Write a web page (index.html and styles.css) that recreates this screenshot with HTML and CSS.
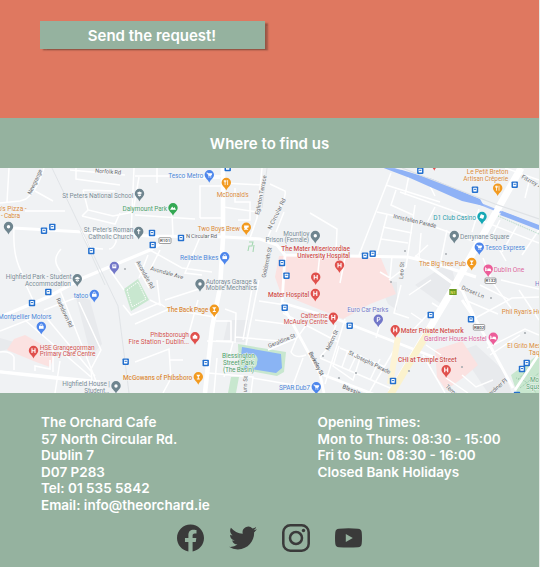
FILE: index.html
```html
<!DOCTYPE html>
<html lang="en">
<head>
<meta charset="utf-8">
<title>The Orchard Cafe</title>
<link rel="stylesheet" href="styles.css">
</head>
<body>
<main class="page">
<section class="request"><button class="send">Send the request!</button></section>
<section class="find"><h2>Where to find us</h2></section>
<svg class="map" viewBox="0 168 539 225" preserveAspectRatio="none">
<defs>
<path id="pin" d="M0 7.8C-.8 4.6-4.7 3.4-4.7-.2a4.7 4.7 0 0 1 9.4 0C4.7 3.4.8 4.6 0 7.8Z"/>
<g id="bus"><rect x="-3.2" y="-3.2" width="6.4" height="6.4" rx=".8" fill="#2470ce"/><rect x="-1.7" y="-1.9" width="3.4" height="3.6" rx=".5" fill="#fff"/><path d="M-1.1-.9h2.2v1h-2.2z" fill="#2470ce"/></g>
<g id="hospital"><use href="#pin" fill="#e0504c"/><path d="M-1.5-2.4v4.6M1.5-2.4v4.6M-1.5 0h3" stroke="#fff" stroke-width="1.1"/></g>
<g id="place"><use href="#pin" fill="#6f858f"/><circle r="1.7" fill="#fff"/></g>
<g id="church"><use href="#pin" fill="#6f858f"/><path d="M0-2.7v5.2M-1.7-1h3.4" stroke="#fff"/></g>
<g id="school"><use href="#pin" fill="#6f858f"/><path d="M-2.8-.7 0-2.2 2.8-.7 0 .8ZM-1.6.6v1.2l1.6.9 1.6-.9V.6L0 1.4Z" fill="#fff"/></g>
<g id="cart"><use href="#pin" fill="#4d86ec"/><path d="M-2.7-2h1.1l1 2.6h2.3l.8-1.9h-3.7" stroke="#fff" stroke-width=".9" fill="#fff"/><circle cx="-.4" cy="1.9" r=".6" fill="#fff"/><circle cx="1.5" cy="1.9" r=".6" fill="#fff"/></g>
<g id="bag"><use href="#pin" fill="#4d86ec"/><path d="M-2.3-.9h4.6v3h-4.6z" fill="#fff"/><path d="M-1.1-.8v-.7a1.1 1.1 0 0 1 2.2 0v.7" fill="none" stroke="#fff" stroke-width=".7"/></g>
<g id="bar"><use href="#pin" fill="#f29a1f"/><path d="M-2.1-2.3h4.2L.5-.2v1.8h1v.8h-3v-.8h1V-.2Z" fill="#fff"/></g>
<g id="food"><use href="#pin" fill="#f29a1f"/><path d="M-1.2-2.6v5M1.3-2.6v5M-2-2.5v1.6h1.6v-1.6" stroke="#fff" stroke-width=".8" fill="none"/></g>
<g id="cup"><use href="#pin" fill="#f29a1f"/><path d="M-2.2-1.9h4.6v1.8H1.3a1.5 1.5 0 0 1-3.5 0Z M-2.2 1.6h4v.7h-4z" fill="#fff"/></g>
<g id="bed"><use href="#pin" fill="#ec5d99"/><path d="M-2.7-1.9v3.8M-2.7 1h5.4v1M-.3-.4h2.5V1h-2.5Z" stroke="#fff" stroke-width=".8" fill="#fff"/><circle cx="-1.5" cy="-.4" r=".7" fill="#fff"/></g>
</defs>
<rect y="168" width="539" height="225" fill="#f0f2f4"/>
<g fill="#e8eaed">
<path d="M0 338 14 342 9 349 0 351ZM75 294 90 300 102 344 91 356ZM377 280 397 282 397 310 388 304ZM415 285 450 262 455 280 440 303ZM228 320h20l-3 22h-22ZM476 345l26 24 10 24h-24l-28-42Z"/>
</g>
<g fill="#fbe2e1">
<path d="M279 256h101l16 38-26 10-27 15-62-25-6-17Z"/>
<path d="M7 350 14 339 25 335 43 345 55 354 50 367 36 362Z"/>
<path d="M435 350 462 341 468 350 478 365 464 377 446 390 437 377Z"/>
</g>
<g fill="#c8e7cf">
<path d="M124 289 138 279 149 300 131 311Z"/>
<path d="M238 344 286 352 284 372 277 376 239 369Z"/>
<path d="M231 377h8l-3 16h-8ZM511 375 539 354v39h-22Z"/>
</g>
<path d="M249 242h4l-1 4h-3l-1 5M254 245l-1 7" fill="none" stroke="#a6d8b2" stroke-width="1.1"/>
<path d="M127 290 138 282 146 299 132 307Z" fill="none" stroke="#fff" stroke-width="1" stroke-dasharray="1.5 1"/>
<path d="M242 347 281 354 282 368 276 373 244 368 246 364a4 4 0 0 0 11-2 4 4 0 0 0-10-5l-6-1Z" fill="#8ab4f4"/>
<path d="M252 357a3.5 3.5 0 1 1 2 7l-6-1v-5Z" fill="#c8e7cf"/>
<path d="M518 380l14-16M520 388l19-15M516 378q12 2 20 15" fill="none" stroke="#88b99a" stroke-width=".7" stroke-dasharray="1 1"/>
<g class="streets">
<path d="M44 168C39 183 35 192 26 199L20 201 0 203M9 168 7 202M35 191l18 10M76 168v11l44 6M70 170l55 5M83 190l32 1M83 190l5 20 25 6 20-4 6-35M82 216l33 8 5-11M88 210l-6 6M134 168l-3 66M65 211H25M14 228C13 250 16 263 24 277M61 249C53 258 55 264 61 272M82 234l9 14 12 1M116 232v10q-3 7-7 7"/>
<path d="M135 176h87M157 168v15M184 178h36M135 215l60 4M172 213l1 23M200 218v-32h22M200 218h23M223 207l35 5M223 183l40 2M235 188v14h15v18h-12M262 168l-5 50-7 20M150 250l32 18 30 4M200 237l-15 36 17 2M135 263l14 25M160 250l-10 20M110 270l14 20"/>
<path d="M270 184l15 7q1 4-2 10l-15 36M284 212l-8 20M310 213l27 16-1 23M320 253l-3 28M345 258l-5 25M391 173l-32 82M386 185l54 17M377 212l32 7M396 190l-5 15 22 10M387 215l-10 39M383 227l29 6M381 239l27 4M415 205l-9 62-17 13M392 256l-2 22-10-6M421 233l-2 25"/>
<path d="M400 192l85 30 54 21M425 176l10 20M435 207l-9 18M432 226l60 22M447 230l-6 30M428 245l-12 11M500 220l-10 20M517 226l-15 26M539 230l-17 25M483 258l10 25 18 25M498 247l8 14M505 168l34 12M530 178l-5 20M405 195l4-20M472 232l7-23"/>
<path d="M0 331l33-13 12-4M26 285l7 15M26 321l65 56M45 316l50 60M60 290l38 96M79 302l22 48-10 19 2 24M44 310l39-15M0 371l100 10M0 352q11-1 14 5v13M60 361l-5 32M53 350v22M35 371v-5l15 3v-9M123 305l8 10 28-12 6 4M139 278l9-23M150 300l10 5-3-25M165 300l37-12M189 333l9-33"/>
<path d="M135 324l34-15 45 8M135 362l34-13 2 31M170 360h13M170 380l-7 13M225 309l11 4-1 30M216 321h15v20h-15M207 341l26 1-9 35M235 337l45 4M259 280l-13 65M232 281l21 2-10 57M259 301l27 4M255 320l30 4M217 358l-3 35M208 373l45 4-2 16M253 378l58 10M293 385l10-27"/>
<path d="M345 319l-20 65M336 325l-9 24-7 8M283 313l55 29M268 350l29-12 10-14M297 337l-6 15q4 7 15 3M320 358l70 30M340 348l45 19M339 346l-6 20 20 14 8-25M348 350l-6 17M357 354l-8 17M370 380l10-21M397 345l-28 48M401 285l-7 28 15 5M381 320l-5 18M431 280l-22 15M429 313l-17 18M423 321l-12-8M432 303l8 5M465 300l33 14M472 320l40-22 27-1M487 348l38-19 14 6M480 285l30 15M501 280l38 9M519 290l20 30M490 355l30-20M426 345l15 10M423 355l22 38M446 378l22 15M462 375l14 12 17-7"/>
</g>
<g class="main-roads">
<path d="M13 228 83 232 150 236 225 237 260 239 277 245 285 255 408 257 440 265 476 277"/>
<path d="M0 317 48 297 83 278 150 250 170 238"/>
<path d="M223 168v70l-3 50-8 40-7 65" stroke-width="4.6"/>
<path d="M285 255l-3 49 38 70 4 19M283 303l56 17 97 38M321 374l65 25M415 256l47 34 13 28 38 70M462 300l13 19M0 372l90 10 12 11M515 390l24-36" stroke-width="2.8"/>
<path d="M521 168 470 258 451 292 391 393" stroke-width="7"/>
<path d="M430 329 389 397" stroke="#fbf2cd" stroke-width="7"/>
<path d="M398 337l-8 47" stroke="#fdf4d6" stroke-width="6"/>
</g>
<path d="M383 165 435 184 478 203 488 207 498 211 539 227" fill="none" stroke="#9dbbf8" stroke-width="2.4"/>
<path d="M381 167 402 170 432 179 480 199 484 206 462 201 410 178ZM502 211 539 225v5l-39-15Z" fill="#8fb2f6"/>
<path d="M521 168 470 258" stroke="#fff" stroke-width="6"/>
<path d="M402 168 495 204 539 219" fill="none" stroke="#dfe2e5" stroke-width="1.3"/>
<path d="M52 168 118 306 129 393M80 230l25 55M267 168l-5 40" fill="none" stroke="#dcdfe3" stroke-width=".8"/>
<path d="M498 216l41 18" stroke="#7dc09b" stroke-dasharray="1 1" stroke-width=".6"/>
<g fill="#a8adb2"><circle cx="446" cy="254" r="1"/><circle cx="405" cy="251" r="1"/><circle cx="323" cy="356" r="1.1"/><circle cx="339" cy="378" r="1.1"/><circle cx="356" cy="373" r="1.1"/><circle cx="462" cy="367" r="1.1"/><circle cx="409" cy="371" r="1.1"/><circle cx="525" cy="333" r="1.1"/><circle cx="491" cy="298" r="1"/><circle cx="391" cy="282" r="1"/><circle cx="125" cy="269" r="1"/></g>
<g class="street-names">
<text transform="translate(31 195) rotate(-65)" textLength="27">Newgrange</text>
<text transform="translate(95 172.6) rotate(4)" textLength="26">Norfolk Rd</text>
<text transform="translate(186 237.8)" textLength="31">N Circular Rd</text>
<text transform="translate(259 215) rotate(-79)" textLength="40">Eglinton Terrace</text>
<text transform="translate(265.5 278) rotate(-78)" textLength="31">Goldsmith St</text>
<text transform="translate(271 230) rotate(-64)" textLength="34">N Circular Rd</text>
<text transform="translate(150 270) rotate(16)" textLength="34">Avondale Ave</text>
<text transform="translate(136 262) rotate(61)" textLength="31">Avondale Rd</text>
<text transform="translate(393 218) rotate(13)" textLength="44">Innisfallen Parade</text>
<text transform="translate(403 279) rotate(-86)" textLength="17">Leo St</text>
<text transform="translate(521 178) rotate(28)" textLength="28">Fitzroy Ave</text>
<text transform="translate(56 299) rotate(65)" textLength="32">Rathdown Rd</text>
<text transform="translate(246.5 396) rotate(-87)" textLength="20">burn St</text>
<text transform="translate(329 351) rotate(-65)" textLength="22">Nelson St</text>
<text class="strong" transform="translate(308.5 353) rotate(62)" textLength="26">Berkeley St</text>
<text transform="translate(348 354) rotate(26)" textLength="46">St Joseph's Parade</text>
<text transform="translate(269 348) rotate(-22)" textLength="29">Geraldine St</text>
<text class="strong" transform="translate(342 388) rotate(22)" textLength="31">Blessington</text>
<text transform="translate(461 289) rotate(23)" textLength="24">Dorset Ln</text>
<text transform="translate(445 387) rotate(42)" textLength="19">Temple</text>
<text transform="translate(488 398) rotate(-41)" textLength="26">Gardiner Pl</text>
</g>
<g class="labels grey">
<text x="62.3" y="197.5" textLength="71">St Peters National School</text>
<text x="83.7" y="232.2" textLength="49.6">St. Peter's Roman</text><text x="88.3" y="239" textLength="45">Catholic Church</text>
<text x="5.7" y="279.3" textLength="66">Highfield Park - Student</text><text x="25" y="286.3" textLength="46">Accommodation</text>
<text x="283.3" y="235.6" textLength="26">Mountjoy</text><text x="265.5" y="242.4" textLength="43.5">Prison (Female)</text>
<text x="460" y="239" textLength="49.3">Derrynane Square</text>
<text x="205.7" y="283.5" textLength="51.5">Autorays Garage &amp;</text><text x="205.7" y="290.2" textLength="51.3">Mobile Mechanics</text>
<text x="62.3" y="386.4" textLength="47.5">Highfield House |</text><text x="84.3" y="393" textLength="25">Student...</text>
</g>
<g class="labels blue">
<text x="168.3" y="178" textLength="35">Tesco Metro</text><text x="180" y="260" textLength="38.3">Reliable Bikes</text>
<text x="485" y="250.3" textLength="40">Tesco Express</text><text x="73.7" y="297.7" textLength="14.5">tatoo</text>
<text x="-2" y="319.3" textLength="53.5">Montpellier Motors</text><text x="279" y="390" textLength="31">SPAR Dub7</text>
</g>
<g class="labels orange">
<text x="-2" y="211" textLength="28.7">o's Pizza -</text><text x="1" y="218.2" textLength="19">- Cabra</text>
<text x="216.7" y="197.2" textLength="32">McDonald's</text><text x="197.7" y="230.5" textLength="42.3">Two Boys Brew</text>
<text x="466.7" y="173.9" textLength="41.6">Le Petit Breton</text><text x="463.3" y="180.7" textLength="45">Artisan Crêperie</text>
<text x="419" y="266" textLength="47">The Big Tree Pub</text><text class="strong" x="167" y="312.3" textLength="41.3">The Back Page</text>
<text class="strong" x="123" y="380.2" textLength="69.3">McGowans of Phibsboro</text><text x="501.7" y="314" textLength="40">Phil Ryan's Ho</text>
<text x="507.3" y="348" textLength="34">El Grito Mex</text><text x="528.7" y="354.8" textLength="11">Taq</text>
</g>
<g class="labels red">
<text class="strong" x="281.3" y="251.4" textLength="68.7">The Mater Misericordiae</text><text class="strong" x="297.3" y="258.2" textLength="52.7">University Hospital</text>
<text class="strong" x="268" y="297" textLength="41.3">Mater Hospital</text><text x="300.7" y="317.6" textLength="27">Catherine</text><text x="283.7" y="324.4" textLength="44">McAuley Centre</text>
<text x="39.7" y="349.5" textLength="55">HSE Grangegorman</text><text x="39.7" y="356.3" textLength="55.8">Primary Care Centre</text>
<text x="150.3" y="337.3" textLength="38.7">Phibsborough</text><text x="128.5" y="344" textLength="60.5">Fire Station - Dublin...</text>
<text class="strong" x="400.7" y="333.4" textLength="63">Mater Private Network</text><text class="strong" x="398" y="362.3" textLength="58.7">CHI at Temple Street</text>
</g>
<g class="labels green"><text x="122.5" y="211" textLength="44.5">Dalymount Park</text><text x="222" y="358" textLength="33">Blessington</text><text x="223" y="364.8" textLength="31">Street Park</text><text x="223" y="371.6" textLength="31">(The Basin)</text><text x="530" y="382" textLength="24">Mountjoy</text><text x="526" y="389" textLength="20">Square</text></g>
<g class="labels pink"><text x="493.7" y="271.8" textLength="30.5">Dublin One</text><text x="424" y="341" textLength="62.7">Gardiner House Hostel</text></g>
<g class="labels teal"><text x="433.3" y="219.5" textLength="42.7">D1 Club Casino</text></g>
<g class="labels purple"><text x="347.3" y="312.4" textLength="41">Euro Car Parks</text><text x="535" y="286" textLength="14">Hotel</text></g>
<g class="badges"><rect x="159" y="237.7" width="12" height="5.8" rx="1"/><text x="165" y="242.3">R101</text><rect x="485" y="278" width="11" height="5.5" rx="1"/><text x="490.5" y="282.4">R132</text><rect x="473.3" y="324.5" width="11.4" height="5.6" rx="1"/><text x="479" y="329">R802</text><rect class="national" x="449.3" y="289" width="7.4" height="6"/><text class="national-text" x="453" y="293.7">N1</text></g>
<use href="#bus" x="44" y="230.7"/><use href="#bus" x="52.3" y="227"/><use href="#bus" x="91.3" y="251"/><use href="#bus" x="227.7" y="168"/><use href="#bus" x="152" y="233"/><use href="#bus" x="152.7" y="245"/><use href="#bus" x="181" y="238"/><use href="#bus" x="365" y="255.7"/><use href="#bus" x="372.7" y="253.7"/><use href="#bus" x="282" y="263"/><use href="#bus" x="286.5" y="275.7"/><use href="#bus" x="420.3" y="170.7"/><use href="#bus" x="475" y="189.7"/><use href="#bus" x="514.7" y="184.7"/><use href="#bus" x="48.3" y="292"/><use href="#bus" x="32" y="303"/><use href="#bus" x="125.7" y="361.7"/><use href="#bus" x="205.7" y="363"/><use href="#bus" x="284.7" y="307.7"/><use href="#bus" x="349.7" y="325.7"/><use href="#bus" x="393" y="381"/><use href="#bus" x="430.7" y="315"/><use href="#bus" x="471" y="319.3"/><use href="#bus" x="526.7" y="363"/><use href="#bus" x="522" y="369"/><use href="#bus" x="517" y="395"/>
<use href="#place" x="8.5" y="226.7"/><use href="#school" x="139.5" y="193.7"/><use href="#church" x="138.7" y="231.7"/><use href="#school" x="77.3" y="279"/><use href="#place" x="315.3" y="235.7"/><use href="#place" x="454.3" y="235.7"/><use href="#place" x="200" y="284"/><use href="#place" x="116" y="386"/>
<use href="#cart" x="209.3" y="175"/><use href="#bag" x="224.7" y="257"/><use href="#cart" x="479.3" y="247.3"/><use href="#bag" x="94.3" y="294.7"/><use href="#bag" x="41.3" y="326.7"/><use href="#cart" x="316.3" y="387"/>
<use href="#food" x="226.3" y="182.7"/><use href="#cup" x="246.3" y="227.5"/><use href="#food" x="497.7" y="188.3"/><use href="#bar" x="471.7" y="262.7"/><use href="#bar" x="214.3" y="309.5"/><use href="#bar" x="198.3" y="377"/>
<use href="#hospital" x="339.5" y="265.3"/><use href="#hospital" x="315.7" y="277.3"/><use href="#hospital" x="315.3" y="293.7"/><use href="#hospital" x="333.3" y="317.5"/><use href="#hospital" x="33.5" y="350.7"/><use href="#hospital" x="395.2" y="330"/><use href="#hospital" x="446.2" y="370"/><use href="#hospital" x="434.3" y="163"/>
<use href="#bed" x="488.2" y="269.3"/><use href="#bed" x="493.3" y="337.5"/>
<g transform="translate(195 337)"><use href="#pin" fill="#e0504c"/><path d="M-2.3-1.2h4.6v3h-4.6zM-1-1.2v-1h2v1" fill="#fff"/></g>
<g transform="translate(173 208)"><use href="#pin" fill="#34a853"/><path d="M-3 1.7-.8-1.6.5.2l.9-1.1L3 1.7Z" fill="#fff"/></g>
<g transform="translate(482 216.7)"><use href="#pin" fill="#16a8b5"/><rect x="-2" y="-2" width="3.8" height="3.8" rx=".6" fill="#fff" transform="rotate(20)"/></g>
<g transform="translate(114.3 266.7)"><use href="#pin" fill="#7277c8"/><path d="M-2-2.2h4v3.8h-4z" fill="#fff"/><path d="M-1.3-1.3h2.6v1h-2.6z" fill="#7277c8"/></g>
<g transform="translate(378.3 319.5)"><use href="#pin" fill="#7277c8"/><path d="M-1 2.5v-4.6H.3a1.3 1.3 0 0 1 0 2.7H-1" fill="none" stroke="#fff"/></g>
</svg>
<footer class="footer">
<div class="details">
<address>The Orchard Cafe<br>57 North Circular Rd.<br>Dublin 7<br>D07 P283<br>Tel: 01 535 5842<br>Email: info@theorchard.ie</address>
<p>Opening Times:<br>Mon to Thurs: 08:30 - 15:00<br>Fri to Sun: 08:30 - 16:00<br>Closed Bank Holidays</p>
</div>
<nav class="social">
<svg width="27" height="28" viewBox="0 0 24 24"><path d="M24 12.07C24 5.4 18.63 0 12 0S0 5.4 0 12.07c0 6.03 4.39 11.02 10.12 11.93v-8.44H7.08v-3.49h3.04V9.41c0-3.02 1.79-4.69 4.53-4.69 1.31 0 2.68.24 2.68.24v2.97h-1.51c-1.49 0-1.95.93-1.95 1.88v2.26h3.32l-.53 3.49h-2.79V24C19.61 23.09 24 18.1 24 12.07Z"/></svg>
<svg width="28" height="28" viewBox="0 0 24 24"><path d="M23.95 4.57a10 10 0 0 1-2.82.78 4.96 4.96 0 0 0 2.16-2.73c-.95.56-2 .96-3.13 1.19a4.92 4.92 0 0 0-8.38 4.48C7.69 8.1 4.07 6.13 1.64 3.16a4.82 4.82 0 0 0-.67 2.48c0 1.71.87 3.21 2.19 4.1a4.9 4.9 0 0 1-2.23-.62v.06a4.92 4.92 0 0 0 3.95 4.83 5 5 0 0 1-2.21.08 4.94 4.94 0 0 0 4.6 3.42A9.87 9.87 0 0 1 0 19.54a14 14 0 0 0 7.55 2.21c9.05 0 14-7.5 14-13.99 0-.21 0-.42-.02-.63a9.94 9.94 0 0 0 2.42-2.56Z"/></svg>
<svg width="28" height="28" viewBox="0 0 28 28"><rect x="1.3" y="1.3" width="25.4" height="25.4" rx="7" fill="none" stroke="#3a3a3a" stroke-width="2.5"/><circle cx="14" cy="14" r="6" fill="none" stroke="#3a3a3a" stroke-width="2.5"/><circle cx="21.5" cy="6.5" r="1.7"/></svg>
<svg width="27" height="28" viewBox="0 0 27 28"><path fill-rule="evenodd" d="M4 4.7Q13.5 3.9 23 4.7q3.4.3 3.7 3.5.6 5.8 0 11.5-.3 3.2-3.7 3.5-9.5.8-19 0Q.6 22.9.3 19.7q-.6-5.7 0-11.5Q.6 5 4 4.7Zm6.8 5.2v8.2l7-4.1Z"/></svg>
</nav>
</footer>
</main>
</body>
</html>
```
FILE: styles.css
```css
* { box-sizing: border-box; }
body { margin: 0; background: #e6eae7; font-family: Inter, "Liberation Sans", sans-serif; }
.page { width: 539px; height: 567px; display: flex; flex-direction: column; background: #95b29f; overflow: hidden; }
.request { height: 118px; padding: 21px 0 0 39.5px; background: #df7860; }
.send { display: block; width: 225px; height: 28px; padding: 1px 0 0; border: 0; background: #95b29f; color: #fff; font: 600 15px/27px Inter, sans-serif; box-shadow: 3px 1.5px 1.5px rgba(80, 50, 40, .5); }
.find { height: 50px; padding-top: 2px; display: flex; align-items: center; justify-content: center; }
.find h2 { margin: 0; color: #fff; font-size: 15px; font-weight: 600; line-height: 20px; }
.map { display: block; width: 539px; height: 225px; flex: none; overflow: hidden; }
.map text { font-family: Roboto, sans-serif; font-size: 6.6px; paint-order: stroke; stroke: #f5f6f7; stroke-width: .8px; }
.map .strong { font-weight: 500; }
.streets path { fill: none; stroke: #fff; stroke-width: 1.5; }
.main-roads { fill: none; stroke: #fff; stroke-width: 3.2; }
.map .street-names text { font-size: 5.8px; fill: #66696d; }
.grey { fill: #7a8c96; }
.blue { fill: #4c86d8; }
.orange { fill: #d98b3c; }
.red { fill: #d15350; }
.green { fill: #4da06b; }
.pink { fill: #d9659b; }
.teal { fill: #2c9cab; }
.purple { fill: #777dc9; }
.badges rect { fill: #fff; stroke: #777; stroke-width: .7; }
.map .badges text { font-size: 4.4px; font-weight: 500; fill: #444; stroke: none; text-anchor: middle; }
.badges .national { fill: #6a9a1f; stroke: none; }
.map .badges .national-text { fill: #f5e96b; }
.footer { flex: 1; display: flex; flex-direction: column; padding-top: 21px; color: #fff; }
.details { display: grid; grid-template-columns: 276.5px auto; height: 110px; padding-left: 41px; font-size: 13.5px; font-weight: 600; line-height: 16.5px; white-space: nowrap; }
.details address, .details p { margin: 0; font-style: normal; }
.social { display: flex; gap: 25px; padding-left: 177px; }
.social svg { display: block; fill: #3a3a3a; }
```
